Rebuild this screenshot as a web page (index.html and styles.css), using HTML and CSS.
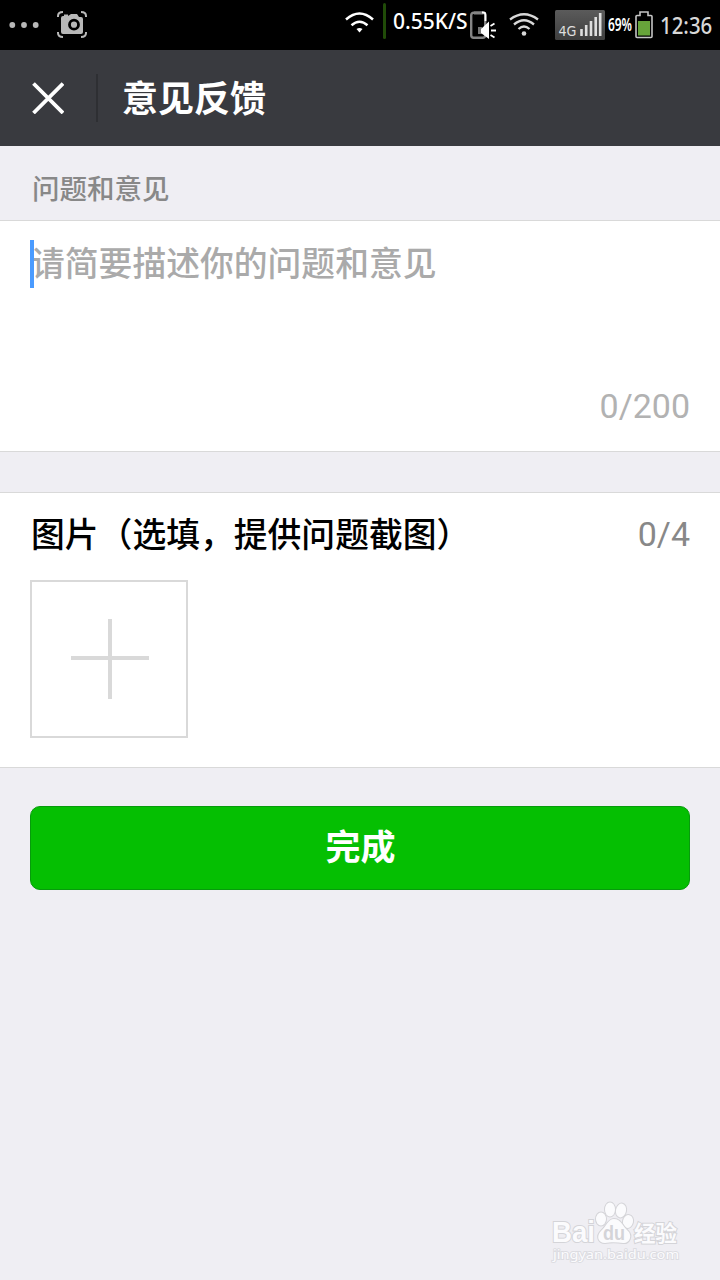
FILE: index.html
```html
<!DOCTYPE html>
<html lang="zh-CN">
<head>
<meta charset="utf-8">
<title>意见反馈</title>
<link rel="stylesheet" href="styles.css">
</head>
<body>
<div class="screen">
  <div class="status-bar">
    <svg class="dots" width="32" height="10" viewBox="0 0 32 10" fill="#b8b8b8"><circle cx="3.3" cy="5" r="2.9"/><circle cx="15" cy="5" r="2.9"/><circle cx="26.7" cy="5" r="2.9"/></svg>
    <svg class="camera" width="30" height="28" viewBox="0 0 30 28">
      <path d="M1 6V5Q1 1 6 1M24 1Q29 1 29 5V6M1 21V22Q1 26 6 26M24 26Q29 26 29 22V21" fill="none" stroke="#b8b8b8" stroke-width="2"/>
      <path d="M6 5H7V3.500H11V5L14 3H20L22 6H24Q26 6 26 8V21Q26 23 24 23H6Q4 23 4 21V7Q4 5 6 5Z" fill="#b8b8b8"/>
      <circle cx="17" cy="13.700" r="4.500" fill="#b8b8b8" stroke="#000" stroke-width="2.800"/>
    </svg>
    <svg class="wifi" width="29" height="22" viewBox="0 0 29 22" fill="none" stroke="#fff" stroke-width="2.500"><path d="M1 7.500Q14.500-4.500 28 7.500M6.500 13.200Q14.500 6.200 22.500 13.200"/><path d="M11.500 17Q14.500 15 17.500 17L14.500 20.500Z" fill="#fff" stroke="none"/></svg>
    <span class="divider-green"></span>
    <span class="speed">0.55K/S</span>
    <svg class="phone" width="27" height="29" viewBox="0 0 27 29">
      <rect x="1.200" y="1.700" width="14" height="25" rx="2.500" fill="#000" stroke="#858585" stroke-width="2.400"/>
      <path d="M4 2H13" stroke="#858585" stroke-width="3"/>
      <path d="M12 1.500H13.500Q15.500 1.500 15.500 4V10" fill="none" stroke="#fff" stroke-width="1.800"/>
      <path d="M8 16H12V23H8Z" fill="#777"/><path d="M11 18L19 10.500V28L11 22Z" fill="#fff"/>
      <path d="M20.500 15L24.500 12.500M21 19.500H26M20.500 24L24.500 26.500" stroke="#fff" stroke-width="1.800"/>
    </svg>
    <svg class="wifi-main" width="30" height="24" viewBox="0 0 30 24" fill="none" stroke="#d8d8d8" stroke-width="2.300"><path d="M1 6.500Q15-4 29 6.500M5 11.500Q15 3 25 11.500M9.500 16Q15 11 20.500 16"/><circle cx="15" cy="20.500" r="2.300" fill="#d8d8d8" stroke="none"/></svg>
    <svg class="signal" width="50" height="30" viewBox="0 0 50 30">
      <defs><linearGradient id="plate" x1="0" y1="0" x2="0" y2="1"><stop offset="0" stop-color="#5b5b5b"/><stop offset="1" stop-color="#3e3e3e"/></linearGradient></defs>
      <rect width="50" height="30" rx="1.500" fill="url(#plate)"/>
      <path d="M26.500 26V19M31.200 26V15M36 26V11M40.700 26V7M45.200 26V3" stroke="#dedede" stroke-width="2.600"/>
      <text class="network" x="3.500" y="26" textLength="18" lengthAdjust="spacingAndGlyphs">4G</text>
    </svg>
    <span class="percent"><span class="percent-text">69%</span></span>
    <svg class="battery" width="18" height="28" viewBox="0 0 18 28"><path d="M2 4.500H5V1H13V4.500H16Q17 4.500 17 5.500V25.500Q17 26.500 16 26.500H2Q1 26.500 1 25.500V5.500Q1 4.500 2 4.500Z" fill="#000" stroke="#c5c5c5" stroke-width="1.600"/><rect x="3" y="10" width="12" height="14.500" fill="#67a43a"/></svg>
    <span class="clock"><span class="clock-text">12:36</span></span>
  </div>

  <header class="title-bar">
    <svg class="close" width="32" height="32" viewBox="0 0 32 32"><path d="M1.500 1.500L31 31M31 1.500L1.500 31" stroke="#fff" stroke-width="3.800"/></svg>
    <span class="title-divider"></span>
    <h1 class="title">意见反馈</h1>
  </header>

  <main>
    <div class="section-label">问题和意见</div>
    <section class="panel feedback">
      <div class="input-line"><span class="caret"></span><span class="placeholder">请简要描述你的问题和意见</span></div>
      <div class="count">0/200</div>
    </section>
    <section class="panel pictures">
      <div class="picture-head"><span class="picture-title">图片（选填，提供问题截图）</span><span class="picture-count">0/4</span></div>
      <div class="add-picture"><svg class="plus" width="78" height="80" viewBox="0 0 78 80"><path d="M39 0V80M0 39H78" stroke="#d9d9d9" stroke-width="4"/></svg></div>
    </section>
    <button class="submit">完成</button>
  </main>

  <svg class="watermark" width="132" height="64" viewBox="0 0 132 64">
    <g class="mark">
      <text class="mark-latin" x="2" y="41" textLength="43" lengthAdjust="spacingAndGlyphs">Bai</text>
      <ellipse cx="51" cy="18" rx="5" ry="6.500"/><ellipse cx="60" cy="8.500" rx="5" ry="7"/><ellipse cx="71" cy="9.500" rx="5" ry="7" transform="rotate(12 71 9.500)"/><ellipse cx="78" cy="20.500" rx="5" ry="6.500" transform="rotate(12 78 20.500)"/>
      <path d="M64 18C71 18 73 26 78 30C83 35 79 43 73 42C67 41 60 41 55 42C48 42 46 35 51 30C56 26 58 18 64 18Z"/>
      <text class="mark-du" x="53" y="39" textLength="22" lengthAdjust="spacingAndGlyphs">du</text>
      <text class="mark-cjk" x="84" y="39.500" textLength="43" lengthAdjust="spacingAndGlyphs">经验</text>
    </g>
    <text class="mark-url" x="3" y="58" textLength="126" lengthAdjust="spacingAndGlyphs">jingyan.baidu.com</text>
  </svg>
</div>
</body>
</html>
```
FILE: styles.css
```css
* { box-sizing: border-box; }
body {
  margin: 0;
  background: #efeef3;
  font-family: Roboto, "Noto Sans CJK SC", sans-serif;
}
svg { display: block; flex: none; }
.screen { position: relative; width: 720px; height: 1280px; overflow: hidden; }
.status-bar {
  display: flex;
  align-items: center;
  height: 50px;
  padding-left: 9px;
  background: #000;
  color: #fff;
  font-family: "Noto Sans", sans-serif;
}
.camera { margin-left: 16px; }
.wifi { margin: 0 0 5px 258px; }
.divider-green { width: 3px; height: 36px; margin: 0 0 8px 9px; border-radius: 2px; background: #204b08; }
.speed { width: 76px; margin: 0 0 8px 7px; font-size: 21px; font-weight: 500; line-height: 30px; white-space: nowrap; }
.phone { margin-left: 1px; }
.wifi-main { margin-left: 12px; }
.signal { margin-left: 16px; }
.network { fill: #dedede; font: 14px "DejaVu Sans", sans-serif; }
.percent { width: 24px; margin-left: 3px; font-size: 17px; font-weight: 600; line-height: 30px; }
.percent-text { display: inline-block; transform: scaleX(0.7); transform-origin: left; }
.battery { margin-left: 3px; }
.clock { width: 53px; margin-left: 7px; color: #d8d8d8; font-size: 24px; font-weight: 500; line-height: 32px; }
.clock-text { display: inline-block; transform: scaleX(0.85); transform-origin: left; }
.title-bar { display: flex; align-items: center; height: 96px; padding-left: 32px; background: #393a3f; }
.title-divider { width: 2px; height: 48px; margin: 0 24px 0 32px; background: #2e2f33; }
.title { margin: 0; padding-top: 3px; color: #fff; font-size: 36px; font-weight: 700; line-height: 48px; }
.section-label { height: 74px; padding: 24px 32px 0; color: #888; font-size: 27.5px; font-weight: 500; line-height: 40px; }
.panel { border: solid #d9d9d9; border-width: 1px 0; background: #fff; }
.feedback { display: flex; flex-direction: column; justify-content: space-between; height: 232px; padding: 19px 30px 21px; }
.input-line { display: flex; align-items: center; height: 48px; }
.caret { z-index: 1; width: 4px; height: 48px; margin-right: -3px; background: #4a9bff; }
.placeholder { padding-top: 2px; color: #aaa; font-size: 33.8px; font-weight: 500; line-height: 48px; white-space: nowrap; }
.count, .picture-count { font-size: 34px; line-height: 48px; }
.count { color: #b2b2b2; text-align: right; }
.pictures { height: 276px; margin-top: 40px; padding: 17px 30px 0; }
.picture-head { display: flex; justify-content: space-between; height: 48px; }
.picture-title { padding: 2px 0 0 1px; font-size: 33.8px; font-weight: 500; line-height: 48px; white-space: nowrap; }
.picture-count { color: #888; }
.add-picture { display: flex; align-items: center; justify-content: center; width: 158px; height: 158px; margin-top: 22px; padding-left: 2px; border: 2px solid #d9d9d9; }
.submit {
  display: block;
  width: 660px;
  height: 84px;
  margin: 38px 30px 0;
  padding: 0 0 7px 1px;
  border: 1px solid #079b0c;
  border-radius: 10px;
  background: #05bf02;
  color: #fff;
  font: 700 35px "Noto Sans CJK SC", sans-serif;
}
.watermark { position: absolute; left: 550px; top: 1201px; overflow: visible; }
.mark { fill: #fbfbfd; stroke: #d4d4d8; stroke-width: 2; paint-order: stroke; }
.mark-latin { font: 700 29px "Liberation Sans", sans-serif; }
.mark-du { fill: #d4d4d8; stroke: none; font: 700 20px "Liberation Sans", sans-serif; }
.mark-cjk { font: 700 22px "Noto Sans CJK SC", sans-serif; }
.mark-url { fill: #fbfbfd; stroke: #dcdce1; stroke-width: 1.8; paint-order: stroke; font: 13px "Noto Sans", sans-serif; }
```
